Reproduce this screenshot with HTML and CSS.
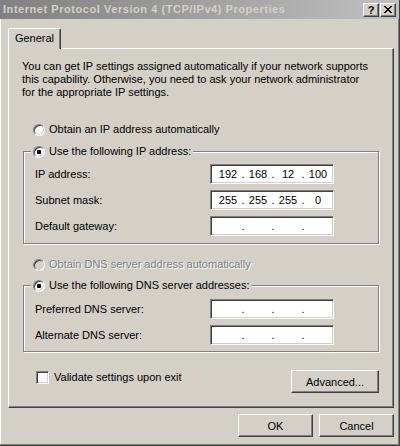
FILE: index.html
```html
<!DOCTYPE html>
<html>
<head>
<meta charset="utf-8">
<link rel="stylesheet" href="styles.css">
</head>
<body>
<div class="window">
  <div class="titlebar">
    <span class="title">Internet Protocol Version 4 (TCP/IPv4) Properties</span>
    <div class="caption-btns">
      <span class="cbtn help">?</span>
      <span class="cbtn close"><svg width="8" height="7" viewBox="0 0 8 7" shape-rendering="crispEdges"><path d="M0 0h2v1H0zM6 0h2v1H6zM1 1h2v1H1zM5 1h2v1H5zM2 2h4v1H2zM3 3h2v1H3zM2 4h4v1H2zM1 5h2v1H1zM5 5h2v1H5zM0 6h2v1H0zM6 6h2v1H6z" fill="#000"/></svg></span>
    </div>
  </div>
  <div class="client">
    <div class="tabstrip"><div class="tab">General</div></div>
    <div class="panel">
      <p class="intro">You can get IP settings assigned automatically if your network supports<br>this capability. Otherwise, you need to ask your network administrator<br>for the appropriate IP settings.</p>

      <div class="opt opt-ip-auto"><span class="radio"></span><span>Obtain an IP address automatically</span></div>

      <div class="group group-ip">
        <div class="group-head"><span class="radio checked"></span><span>Use the following IP address:</span></div>
        <div class="field-row first"><span class="flabel">IP address:</span>
          <div class="ipbox"><span class="seg">192</span><span class="dot">.</span><span class="seg">168</span><span class="dot">.</span><span class="seg">12</span><span class="dot">.</span><span class="seg">100</span></div></div>
        <div class="field-row"><span class="flabel">Subnet mask:</span>
          <div class="ipbox"><span class="seg">255</span><span class="dot">.</span><span class="seg">255</span><span class="dot">.</span><span class="seg">255</span><span class="dot">.</span><span class="seg">0</span></div></div>
        <div class="field-row"><span class="flabel">Default gateway:</span>
          <div class="ipbox"><span class="seg"></span><span class="dot">.</span><span class="seg"></span><span class="dot">.</span><span class="seg"></span><span class="dot">.</span><span class="seg"></span></div></div>
      </div>

      <div class="opt opt-dns-auto disabled"><span class="radio off"></span><span>Obtain DNS server address automatically</span></div>

      <div class="group group-dns">
        <div class="group-head"><span class="radio checked"></span><span>Use the following DNS server addresses:</span></div>
        <div class="field-row first"><span class="flabel">Preferred DNS server:</span>
          <div class="ipbox"><span class="seg"></span><span class="dot">.</span><span class="seg"></span><span class="dot">.</span><span class="seg"></span><span class="dot">.</span><span class="seg"></span></div></div>
        <div class="field-row"><span class="flabel">Alternate DNS server:</span>
          <div class="ipbox"><span class="seg"></span><span class="dot">.</span><span class="seg"></span><span class="dot">.</span><span class="seg"></span><span class="dot">.</span><span class="seg"></span></div></div>
      </div>

      <div class="bottom-row">
        <div class="check-opt"><span class="checkbox"></span><span>Validate settings upon exit</span></div>
        <span class="btn btn-adv">Advanced...</span>
      </div>
    </div>
    <div class="footer">
      <span class="btn">OK</span>
      <span class="btn">Cancel</span>
    </div>
  </div>
</div>
</body>
</html>
```

FILE: styles.css
```css
* { box-sizing: border-box; }
html, body { margin: 0; padding: 0; }
body {
  width: 400px;
  height: 446px;
  overflow: hidden;
  background: #d4d0c8;
  font-family: "Liberation Sans", Arial, sans-serif;
  font-size: 11px;
  color: #000;
}
.window {
  width: 400px;
  height: 446px;
  background: #d4d0c8;
  border-right: 1px solid #404040;
  border-bottom: 1px solid #404040;
  box-shadow: inset -1px -1px #808080, inset 1px 0 #ffffff;
  display: flex;
  flex-direction: column;
}
.titlebar {
  height: 19px;
  flex: none;
  background: linear-gradient(to right, #808080, #c0c0c0);
  display: flex;
  align-items: center;
  padding: 0 3px 0 3px;
}
.title {
  flex: 1;
  color: #d4d0c8;
  font-weight: bold;
  letter-spacing: 0.55px;
  white-space: nowrap;
  line-height: 19px;
}
.caption-btns { display: flex; gap: 1px; }
.cbtn {
  width: 16px;
  height: 14px;
  background: #d4d0c8;
  border: 1px solid;
  border-color: #ffffff #404040 #404040 #ffffff;
  box-shadow: inset -1px -1px #808080;
  display: flex;
  align-items: center;
  justify-content: center;
  font-weight: bold;
  font-size: 11px;
  line-height: 12px;
}
.client {
  flex: 1;
  display: flex;
  flex-direction: column;
  padding: 9px 5px 0 8px;
}
.tabstrip { display: flex; }
.tab {
  position: relative;
  z-index: 1;
  width: 53px;
  height: 21px;
  margin-bottom: -1px;
  background: #d4d0c8;
  border-top: 1px solid #ffffff;
  border-left: 1px solid #ffffff;
  border-right: 1px solid #404040;
  border-radius: 2px 2px 0 0;
  box-shadow: inset -1px 0 #808080;
  text-align: center;
  line-height: 19px;
}
.panel {
  height: 360px;
  border-top: 1px solid #ffffff;
  border-left: 1px solid #ffffff;
  border-right: 1px solid #404040;
  border-bottom: 1px solid #404040;
  box-shadow: inset -1px -1px #808080;
  padding: 0 14px;
}
.intro {
  margin: 11px 0 0 -1px;
  line-height: 13px;
}
.opt {
  display: flex;
  align-items: center;
  gap: 4px;
  height: 13px;
  margin-left: 10px;
  line-height: 13px;
}
.opt-ip-auto { margin-top: 24px; }
.opt-dns-auto { margin-top: 14px; }
.disabled { color: #808080; text-shadow: 1px 1px #ffffff; }
.radio {
  width: 12px;
  height: 12px;
  flex: none;
  border-radius: 50%;
  background: #ffffff;
  border: 1px solid;
  border-color: #808080 #ffffff #ffffff #808080;
  box-shadow: inset 1px 1px #404040, inset -1px -1px #d4d0c8;
  display: flex;
  align-items: center;
  justify-content: center;
}
.radio.off { background: #d4d0c8; }
.radio.checked::after {
  content: "";
  width: 4px;
  height: 4px;
  border-radius: 1px;
  background: #000;
}
.group {
  border: 1px solid #808080;
  box-shadow: inset 1px 1px #ffffff, 1px 1px #ffffff;
  padding: 0 44px 7px 11px;
}
.group-ip { margin-top: 15px; }
.group-dns { margin-top: 14px; padding-bottom: 6px; }
.group-head {
  display: flex;
  align-items: center;
  gap: 4px;
  width: fit-content;
  height: 13px;
  line-height: 13px;
  margin: -7px 0 0 -4px;
  padding: 0 2px;
  background: #d4d0c8;
}
.field-row {
  display: flex;
  align-items: center;
  height: 20px;
  margin-top: 6px;
}
.group-dns .field-row.first { margin-top: 7px; }
.flabel { flex: 1; }
.ipbox {
  width: 124px;
  height: 20px;
  background: #ffffff;
  border: 1px solid;
  border-color: #808080 #ffffff #ffffff #808080;
  box-shadow: inset 1px 1px #404040, inset -1px -1px #d4d0c8;
  display: flex;
  align-items: center;
  padding-left: 2px;
  line-height: 16px;
}
.seg { width: 30px; text-align: center; }
.dot { width: 0; display: flex; justify-content: center; }
.bottom-row {
  display: flex;
  justify-content: space-between;
  align-items: flex-start;
  margin-top: 18px;
  height: 23px;
}
.check-opt {
  display: flex;
  align-items: center;
  gap: 5px;
  height: 13px;
  line-height: 13px;
  margin: 1px 0 0 13px;
}
.checkbox {
  width: 13px;
  height: 13px;
  background: #ffffff;
  border: 1px solid;
  border-color: #808080 #ffffff #ffffff #808080;
  box-shadow: inset 1px 1px #404040, inset -1px -1px #d4d0c8;
}
.btn {
  width: 75px;
  height: 23px;
  background: #d4d0c8;
  border: 1px solid;
  border-color: #ffffff #404040 #404040 #ffffff;
  box-shadow: inset -1px -1px #808080;
  display: flex;
  align-items: center;
  justify-content: center;
}
.btn-adv { width: 88px; }
.footer {
  display: flex;
  justify-content: flex-end;
  gap: 6px;
  margin-top: 6px;
}
```
